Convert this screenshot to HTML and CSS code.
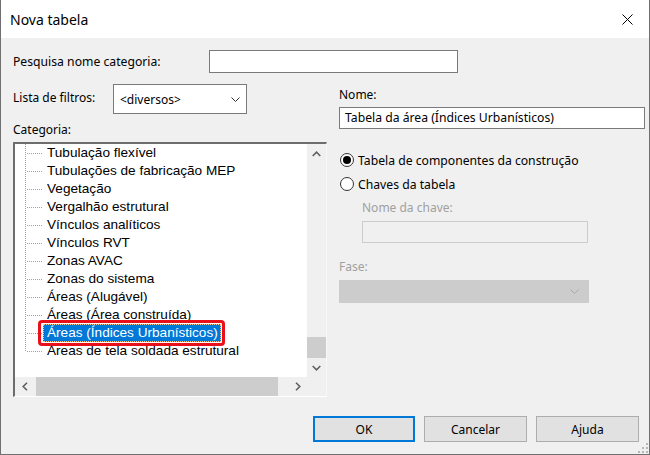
FILE: index.html
```html
<!DOCTYPE html>
<html lang="pt">
<head>
    <meta charset="UTF-8">
    <title>Nova tabela</title>
    <link rel="stylesheet" href="styles.css">
</head>
<body>
    <div class="window">
        <div class="titlebar">
            <span class="title">Nova tabela</span>
            <svg class="close" width="11" height="11" viewBox="0 0 11 11">
                <path d="M0.5 0.5 L10.5 10.5 M10.5 0.5 L0.5 10.5" stroke="#000" stroke-width="1" fill="none"/>
            </svg>
        </div>

        <div class="content">
            <div class="search-row">
                <span class="search-label">Pesquisa nome categoria:</span>
                <div class="textbox search-box"></div>
            </div>

            <div class="main">
                <div class="left">
                    <div class="filter-row">
                        <span class="filter-label">Lista de filtros:</span>
                        <div class="combo">
                            <span>&lt;diversos&gt;</span>
                            <svg width="9" height="5" viewBox="0 0 9 5"><path d="M0.5 0.5 L4.5 4.5 L8.5 0.5" stroke="#333" fill="none"/></svg>
                        </div>
                    </div>
                    <div class="cat-label">Categoria:</div>

                    <div class="listbox">
                        <div class="list-area">
                            <div class="tree">
                                <div class="item"><span class="branch"></span><span class="text">Tubulação flexível</span></div>
                                <div class="item"><span class="branch"></span><span class="text">Tubulações de fabricação MEP</span></div>
                                <div class="item"><span class="branch"></span><span class="text">Vegetação</span></div>
                                <div class="item"><span class="branch"></span><span class="text">Vergalhão estrutural</span></div>
                                <div class="item"><span class="branch"></span><span class="text">Vínculos analíticos</span></div>
                                <div class="item"><span class="branch"></span><span class="text">Vínculos RVT</span></div>
                                <div class="item"><span class="branch"></span><span class="text">Zonas AVAC</span></div>
                                <div class="item"><span class="branch"></span><span class="text">Zonas do sistema</span></div>
                                <div class="item"><span class="branch"></span><span class="text">Áreas (Alugável)</span></div>
                                <div class="item"><span class="branch"></span><span class="text">Áreas (Área construída)</span></div>
                                <div class="item"><span class="branch"></span><span class="text selected">Áreas (Índices Urbanísticos)</span></div>
                                <div class="item last"><span class="branch"></span><span class="text">Áreas de tela soldada estrutural</span></div>
                            </div>
                            <div class="vscroll">
                                <div class="sb-btn">
                                    <svg width="9" height="6" viewBox="0 0 9 6"><path d="M0.7 5 L4.5 1.2 L8.3 5" stroke="#606060" stroke-width="1.6" fill="none"/></svg>
                                </div>
                                <div class="vtrack"><div class="vthumb"></div></div>
                                <div class="sb-btn">
                                    <svg width="9" height="6" viewBox="0 0 9 6"><path d="M0.7 1 L4.5 4.8 L8.3 1" stroke="#606060" stroke-width="1.6" fill="none"/></svg>
                                </div>
                            </div>
                        </div>
                        <div class="hscroll">
                            <div class="sb-btn">
                                <svg width="6" height="9" viewBox="0 0 6 9"><path d="M5 0.7 L1.2 4.5 L5 8.3" stroke="#606060" stroke-width="1.6" fill="none"/></svg>
                            </div>
                            <div class="htrack"><div class="hthumb"></div></div>
                            <div class="sb-btn">
                                <svg width="6" height="9" viewBox="0 0 6 9"><path d="M1 0.7 L4.8 4.5 L1 8.3" stroke="#606060" stroke-width="1.6" fill="none"/></svg>
                            </div>
                            <div class="corner"></div>
                        </div>
                    </div>
                </div>

                <div class="right">
                    <div class="name-label">Nome:</div>
                    <div class="textbox name-box">Tabela da área (Índices Urbanísticos)</div>

                    <div class="radios">
                        <div class="radio-row"><span class="radio checked"></span><span>Tabela de componentes da construção</span></div>
                        <div class="radio-row"><span class="radio"></span><span>Chaves da tabela</span></div>
                    </div>

                    <div class="key-label disabled">Nome da chave:</div>
                    <div class="textbox key-box"></div>

                    <div class="phase-label disabled">Fase:</div>
                    <div class="combo phase-combo">
                        <span></span>
                        <svg width="9" height="5" viewBox="0 0 9 5"><path d="M0.5 0.5 L4.5 4.5 L8.5 0.5" stroke="#a8a8a8" fill="none"/></svg>
                    </div>
                </div>
            </div>

            <div class="footer">
                <button class="btn default">OK</button>
                <button class="btn">Cancelar</button>
                <button class="btn">Ajuda</button>
            </div>
        </div>

        <svg class="grip" width="12" height="12" viewBox="0 0 12 12">
            <rect x="9" y="1" width="2" height="2" fill="#b8b8b8"/>
            <rect x="5" y="5" width="2" height="2" fill="#b8b8b8"/>
            <rect x="9" y="5" width="2" height="2" fill="#b8b8b8"/>
            <rect x="1" y="9" width="2" height="2" fill="#b8b8b8"/>
            <rect x="5" y="9" width="2" height="2" fill="#b8b8b8"/>
            <rect x="9" y="9" width="2" height="2" fill="#b8b8b8"/>
        </svg>
    </div>
</body>
</html>
```

FILE: styles.css
```css
* {
    box-sizing: border-box;
}

body {
    margin: 0;
    font-family: "Noto Sans", sans-serif;
    font-size: 12px;
    color: #000;
    background: #f0f0f0;
}

.window {
    position: relative;
    width: 650px;
    height: 455px;
    display: flex;
    flex-direction: column;
    background: #f0f0f0;
    border: 1px solid #707070;
    border-top: none;
}

.titlebar {
    height: 38px;
    flex: none;
    display: flex;
    align-items: center;
    justify-content: space-between;
    padding: 0 16px 0 9px;
    background: #fff;
}

.title {
    font-size: 14px;
}

.content {
    flex: 1;
    display: flex;
    flex-direction: column;
    padding: 12px 10px 12px 12px;
}

.textbox {
    background: #fff;
    border: 1px solid #7a7a7a;
}

.search-row {
    display: flex;
    align-items: center;
    height: 23px;
}

.search-label {
    width: 196px;
    font-size: 12.2px;
}

.search-box {
    width: 249px;
    height: 23px;
}

.main {
    display: flex;
    gap: 12px;
    margin-top: 11px;
}

.left {
    width: 314px;
    flex: none;
}

.filter-row {
    display: flex;
    align-items: center;
    height: 30px;
}

.filter-label {
    width: 100px;
    margin-top: -4px;
}

.combo {
    width: 134px;
    height: 30px;
    display: flex;
    align-items: center;
    justify-content: space-between;
    padding: 0 6px 0 6px;
    background: #fff;
    border: 1px solid #7a7a7a;
}

.cat-label {
    padding-top: 8px;
    line-height: 16px;
    margin-bottom: 4px;
}

/* tree list */
.listbox {
    width: 314px;
    height: 255px;
    border-style: solid;
    border-width: 2px 1px 1px 2px;
    border-color: #6d6d6d #f8f8f8 #fff #6d6d6d;
    background: #f0f0f0;
}

.list-area {
    display: flex;
    height: 233px;
}

.tree {
    width: 292px;
    background: #fff;
    font-family: "Liberation Sans", Arial, sans-serif;
    font-size: 13.6px;
}

.item {
    display: flex;
    height: 18px;
    line-height: 18px;
}

.branch {
    width: 18px;
    height: 18px;
    flex: none;
    margin-left: 10px;
    background-image:
        repeating-linear-gradient(to bottom, #a0a0a0 0 1px, transparent 1px 2px),
        repeating-linear-gradient(to right, #a0a0a0 0 1px, transparent 1px 2px);
    background-size: 1px 18px, 16px 1px;
    background-position: 0 0, 2px 9px;
    background-repeat: no-repeat;
}

.item.last .branch {
    background-size: 1px 10px, 16px 1px;
}

.text {
    padding: 0 3px 0 4px;
    white-space: nowrap;
}

.text.selected {
    position: relative;
    background: #0078d7;
    color: #fff;
    outline: 1px dotted #f3c98b;
    outline-offset: -1px;
}

.text.selected::after {
    content: "";
    position: absolute;
    left: -5px;
    right: -4px;
    top: -4px;
    bottom: -4px;
    border: 3px solid #e8101a;
    border-radius: 4px;
}

.sb-btn {
    width: 19px;
    height: 19px;
    flex: none;
    display: flex;
    align-items: center;
    justify-content: center;
}

.vscroll {
    width: 19px;
    display: flex;
    flex-direction: column;
}

.vtrack {
    flex: 1;
    display: flex;
    flex-direction: column;
    justify-content: flex-end;
}

.vthumb {
    height: 21px;
    background: #cdcdcd;
}

.hscroll {
    display: flex;
    height: 19px;
}

.htrack {
    width: 254px;
    padding-left: 2px;
}

.hthumb {
    width: 242px;
    height: 19px;
    background: #cdcdcd;
}

.corner {
    width: 19px;
}

/* right side */
.right {
    width: 306px;
    flex: none;
}

.name-label {
    padding-top: 3px;
    line-height: 16px;
    margin-bottom: 4px;
}

.name-box {
    height: 22px;
    line-height: 20px;
    padding-left: 5px;
    font-size: 12.2px;
}

.radios {
    display: flex;
    flex-direction: column;
    gap: 4px;
    margin-top: 21px;
    font-size: 12.2px;
}

.radio-row {
    display: flex;
    align-items: center;
    height: 20px;
}

.radio {
    width: 14px;
    height: 14px;
    margin: 0 4px 0 1px;
    border: 1px solid #333;
    border-radius: 50%;
    background: #fff;
    display: flex;
    align-items: center;
    justify-content: center;
}

.radio.checked::after {
    content: "";
    width: 8px;
    height: 8px;
    border-radius: 50%;
    background: #000;
}

.disabled {
    color: #a0a0a0;
}

.key-label {
    padding-top: 6px;
    line-height: 16px;
    margin: 0 0 5px 23px;
}

.key-box {
    width: 226px;
    height: 22px;
    margin-left: 23px;
    background: #f0f0f0;
    border-color: #cccccc;
}

.phase-label {
    padding-top: 16px;
    line-height: 16px;
    margin-bottom: 5px;
}

.phase-combo {
    width: 250px;
    height: 23px;
    background: #cccccc;
    border-color: #cccccc;
    padding-right: 9px;
}

/* buttons */
.footer {
    margin-top: auto;
    display: flex;
    justify-content: flex-end;
    gap: 9px;
}

.btn {
    width: 103px;
    height: 26px;
    font-family: "Noto Sans", sans-serif;
    font-size: 12px;
    color: #000;
    background: #e1e1e1;
    border: 1px solid #adadad;
    padding: 0;
}

.btn.default {
    width: 102px;
    border: 2px solid #0078d7;
}

.grip {
    position: absolute;
    right: 0;
    bottom: 0;
}
```
